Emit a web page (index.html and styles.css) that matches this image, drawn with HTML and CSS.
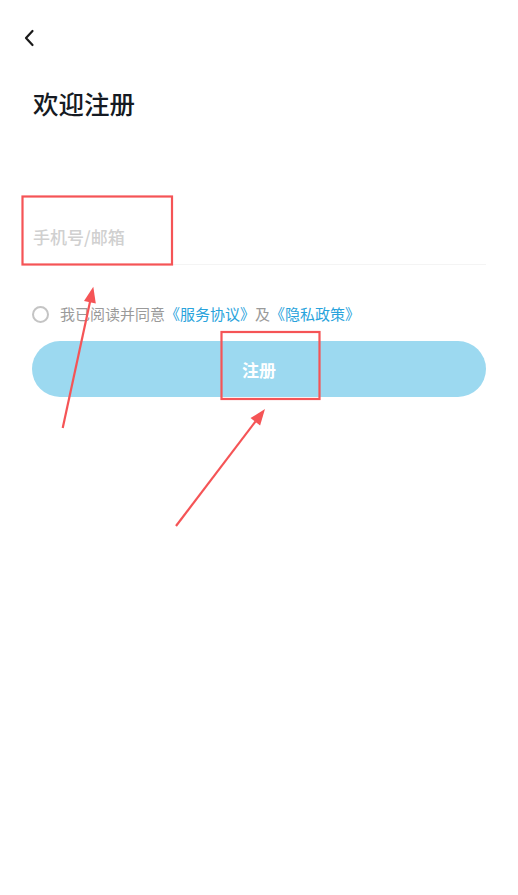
FILE: index.html
```html
<!DOCTYPE html>
<html lang="zh-CN">
<head>
<meta charset="utf-8">
<title>欢迎注册</title>
<link rel="stylesheet" href="styles.css">
</head>
<body>
<div class="page">
  <div class="topbar">
    <svg class="back" width="12" height="18" viewBox="0 0 12 18"><path d="M9.5 2 L3 9 L9.5 16" fill="none" stroke="#1a1a1a" stroke-width="2.2" stroke-linecap="round" stroke-linejoin="round"/></svg>
  </div>
  <main class="content">
    <h1 class="title">欢迎注册</h1>
    <div class="field"><span class="placeholder">手机号/邮箱</span></div>
    <div class="agree">
      <span class="radio"></span>
      <span class="agree-text">我已阅读并同意<span class="link">《服务协议》</span>及<span class="link">《隐私政策》</span></span>
    </div>
    <button class="submit">注册</button>
  </main>
  <svg class="annot" width="518" height="895" viewBox="0 0 518 895">
    <g fill="none" stroke="#f55456" stroke-width="2.2">
      <rect x="22.5" y="196.5" width="149.5" height="68"/>
      <rect x="221.5" y="332" width="98" height="67"/>
      <line x1="62.7" y1="428" x2="90.2" y2="301"/>
      <line x1="176" y1="526" x2="255.6" y2="421.3"/>
    </g>
    <g fill="#f55456">
      <polygon points="93.3,286.7 95.8,303.6 84.0,301.0"/>
      <polygon points="265,409 260.1,425.4 250.5,418.1"/>
    </g>
  </svg>
</div>
</body>
</html>
```

FILE: styles.css
```css
* { box-sizing: border-box; }
html, body {
  margin: 0;
  padding: 0;
  background: #ffffff;
}
body {
  font-family: "Noto Sans CJK SC", "Noto Sans", sans-serif;
  width: 518px;
  height: 895px;
  overflow: hidden;
}
.page {
  position: relative;
  width: 518px;
  height: 895px;
}
.topbar {
  height: 76px;
  padding: 29px 0 0 23px;
}
.back { display: block; }
.content {
  padding: 0 32px;
}
.title {
  margin: 10px 0 0 1px;
  font-size: 25.5px;
  line-height: 34px;
  font-weight: 500;
  color: #151a22;
}
.field {
  margin-top: 89px;
  height: 56px;
  border-bottom: 1px solid #f4f4f4;
  display: flex;
  align-items: center;
}
.placeholder {
  font-size: 17px;
  line-height: 24px;
  color: #d0d0d0;
  font-weight: 500;
  padding-left: 1px;
}
.agree {
  margin-top: 38px;
  height: 22px;
  display: flex;
  align-items: center;
}
.radio {
  width: 17px;
  height: 17px;
  border: 2px solid #c4c4c4;
  border-radius: 50%;
  flex: none;
}
.agree-text {
  margin-left: 11px;
  font-size: 15px;
  line-height: 22px;
  color: #9a9a9a;
}
.link { color: #29a3dc; }
.submit {
  display: block;
  margin-top: 16px;
  width: 454px;
  height: 56px;
  border: none;
  border-radius: 28px;
  background: #9cd9f0;
  color: #ffffff;
  font-family: "Noto Sans CJK SC", "Noto Sans", sans-serif;
  font-size: 17px;
  font-weight: 700;
  padding: 0;
}
.annot {
  position: absolute;
  left: 0;
  top: 0;
  pointer-events: none;
}
```
